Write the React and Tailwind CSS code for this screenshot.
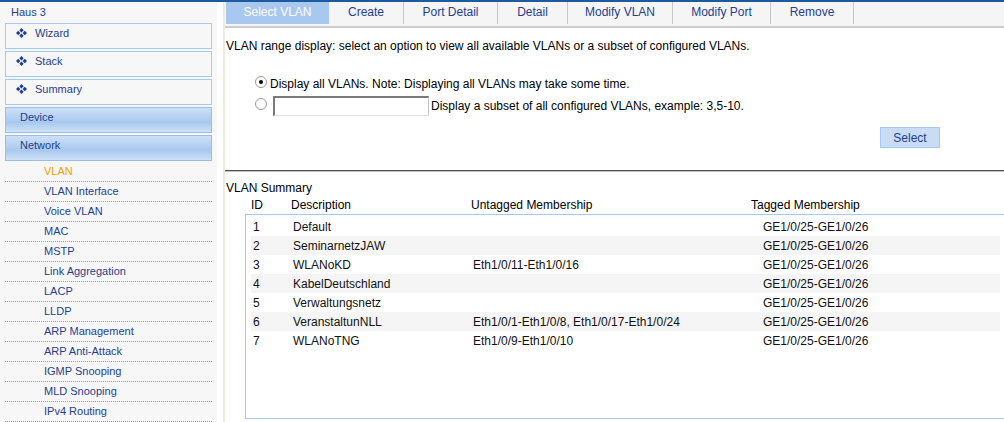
import React from 'react';

const menuBoxes = ['Wizard', 'Stack', 'Summary'];
const groups = ['Device', 'Network'];
const subItems = [
  'VLAN', 'VLAN Interface', 'Voice VLAN', 'MAC', 'MSTP', 'Link Aggregation', 'LACP',
  'LLDP', 'ARP Management', 'ARP Anti-Attack', 'IGMP Snooping', 'MLD Snooping', 'IPv4 Routing',
];
const tabs = [
  { label: 'Select VLAN', w: 'w-[103px]', active: true },
  { label: 'Create', w: 'w-[75px]' },
  { label: 'Port Detail', w: 'w-[94px]' },
  { label: 'Detail', w: 'w-[70px]' },
  { label: 'Modify VLAN', w: 'w-[105px]' },
  { label: 'Modify Port', w: 'w-[98px]' },
  { label: 'Remove', w: 'w-[83px]' },
];
const vlans = [
  { id: 1, desc: 'Default', untagged: '', tagged: 'GE1/0/25-GE1/0/26' },
  { id: 2, desc: 'SeminarnetzJAW', untagged: '', tagged: 'GE1/0/25-GE1/0/26' },
  { id: 3, desc: 'WLANoKD', untagged: 'Eth1/0/11-Eth1/0/16', tagged: 'GE1/0/25-GE1/0/26' },
  { id: 4, desc: 'KabelDeutschland', untagged: '', tagged: 'GE1/0/25-GE1/0/26' },
  { id: 5, desc: 'Verwaltungsnetz', untagged: '', tagged: 'GE1/0/25-GE1/0/26' },
  { id: 6, desc: 'VeranstaltunNLL', untagged: 'Eth1/0/1-Eth1/0/8, Eth1/0/17-Eth1/0/24', tagged: 'GE1/0/25-GE1/0/26' },
  { id: 7, desc: 'WLANoTNG', untagged: 'Eth1/0/9-Eth1/0/10', tagged: 'GE1/0/25-GE1/0/26' },
];

function Diamond() {
  return (
    <svg width="11" height="10" viewBox="0 0 11 10" className="shrink-0 text-[#1f3f8f]">
      <polygon points="5.5,0 7.7,2.2 5.5,4.4 3.3,2.2" fill="currentColor" />
      <polygon points="2.2,2.8 4.4,5 2.2,7.2 0,5" fill="currentColor" />
      <polygon points="8.8,2.8 11,5 8.8,7.2 6.6,5" fill="currentColor" />
      <polygon points="5.5,5.6 7.7,7.8 5.5,10 3.3,7.8" fill="currentColor" />
    </svg>
  );
}

function Radio({ checked }) {
  return (
    <span className="w-[12px] h-[12px] rounded-full border border-[#9a9a9a] bg-white flex items-center justify-center shrink-0">
      {checked && <span className="w-[4px] h-[4px] rounded-full bg-black" />}
    </span>
  );
}

export default function App() {
  return (
    <div className="w-[1004px] h-[422px] overflow-hidden flex border-t-2 border-[#1e5a9e] bg-white font-['Liberation_Sans',Arial,sans-serif]">
      {/* Sidebar */}
      <div className="w-[217px] h-full bg-[#f7f7f7] text-[11px] text-[#1f3f8f]">
        <div className="pl-[11px] pt-[3px] mb-[4px] leading-[14px]">Haus 3</div>
        {menuBoxes.map((m) => (
          <div key={m} className="mx-[5px] w-[207px] h-[26px] mb-[2px] border border-[#a9c8ef] flex items-start pt-[4px] pl-[10px] gap-[8px] leading-[14px]">
            <Diamond />
            <span className="-mt-[2px]">{m}</span>
          </div>
        ))}
        {groups.map((g) => (
          <div key={g} className="mx-[5px] w-[207px] h-[26px] mb-[2px] border border-[#9abde9] bg-linear-to-b from-[#cde0f7] via-[#a9c8ee] via-60% to-[#cfe2f8] pl-[14px] pt-[2px] leading-[14px]">
            {g}
          </div>
        ))}
        <div className="-mt-[1px]">
          {subItems.map((s, i) => (
            <div key={s} className={`mx-[5px] w-[207px] h-[20px] border-b border-dotted border-[#9a9a9a] pl-[39px] leading-[19px] ${i === 0 ? 'text-[#f0a000]' : ''}`}>
              {s}
            </div>
          ))}
        </div>
      </div>
      <div className="w-[6px] bg-white" />
      <div className="w-[2px] bg-[#ecedde]" />

      {/* Main */}
      <div className="flex-1 flex flex-col text-[12px] text-black">
        <div className="h-[26px] bg-[#f5f5f5] border-b-2 border-[#cccccc] flex items-start pl-px">
          {tabs.map((t) => (
            <div
              key={t.label}
              className={`${t.w} h-[22px] flex items-center justify-center leading-[14px] pb-[2px] ${t.active ? 'bg-[#a9c8ef] text-white' : 'text-[#1f3f8f] border-r border-[#c8c8c8]'}`}
            >
              {t.label}
            </div>
          ))}
        </div>

        <div className="pl-px mt-[11px] leading-[14px]">
          VLAN range display: select an option to view all available VLANs or a subset of configured VLANs.
        </div>

        <div className="pl-[30px] mt-[22px] flex items-center h-[18px] gap-[3px]">
          <span className="-mt-[4px]"><Radio checked /></span>
          <span className="leading-[14px]">Display all VLANs. Note: Displaying all VLANs may take some time.</span>
        </div>
        <div className="pl-[30px] mt-[3px] flex items-center h-[20px]">
          <span className="-mt-[4px]"><Radio /></span>
          <input
            type="text"
            className="ml-[6px] w-[156px] h-[20px] bg-white border-t-2 border-l-2 border-[#7a7a7a] border-r border-b border-r-[#c8c8c8] border-b-[#e0e0e0] outline-none"
          />
          <span className="ml-[2px] leading-[14px]">Display a subset of all configured VLANs, example: 3,5-10.</span>
        </div>

        <div className="flex justify-end pr-[64px] mt-[11px]">
          <button className="w-[60px] h-[21px] bg-[#c9dcf5] border border-[#a9c8ef] text-[#1f3f8f] text-[12px] leading-[14px]">
            Select
          </button>
        </div>

        <div className="mt-[22px] h-[2px] border-t border-[#505050] border-b border-b-[#c4c4c4]" />

        <div className="pl-px mt-[9px] leading-[14px]">VLAN Summary</div>
        <div className="flex pl-[26px] mt-[3px] leading-[14px]">
          <div className="w-[40px]">ID</div>
          <div className="w-[180px]">Description</div>
          <div className="w-[280px]">Untagged Membership</div>
          <div>Tagged Membership</div>
        </div>

        <div className="ml-[20px] mt-[2px] mb-[3px] flex-1 border border-r-0 border-[#a9c8ef] pt-[2px] pl-[5px] pr-[4px]">
          {vlans.map((v, i) => (
            <div key={v.id} className={`flex h-[19px] items-center leading-[14px] text-[#111] ${i % 2 === 1 ? 'bg-[#f5f5f5]' : ''}`}>
              <div className="w-[42px] pl-[2px]">{v.id}</div>
              <div className="w-[180px]">{v.desc}</div>
              <div className="w-[290px]">{v.untagged}</div>
              <div>{v.tagged}</div>
            </div>
          ))}
        </div>
      </div>
    </div>
  );
}
